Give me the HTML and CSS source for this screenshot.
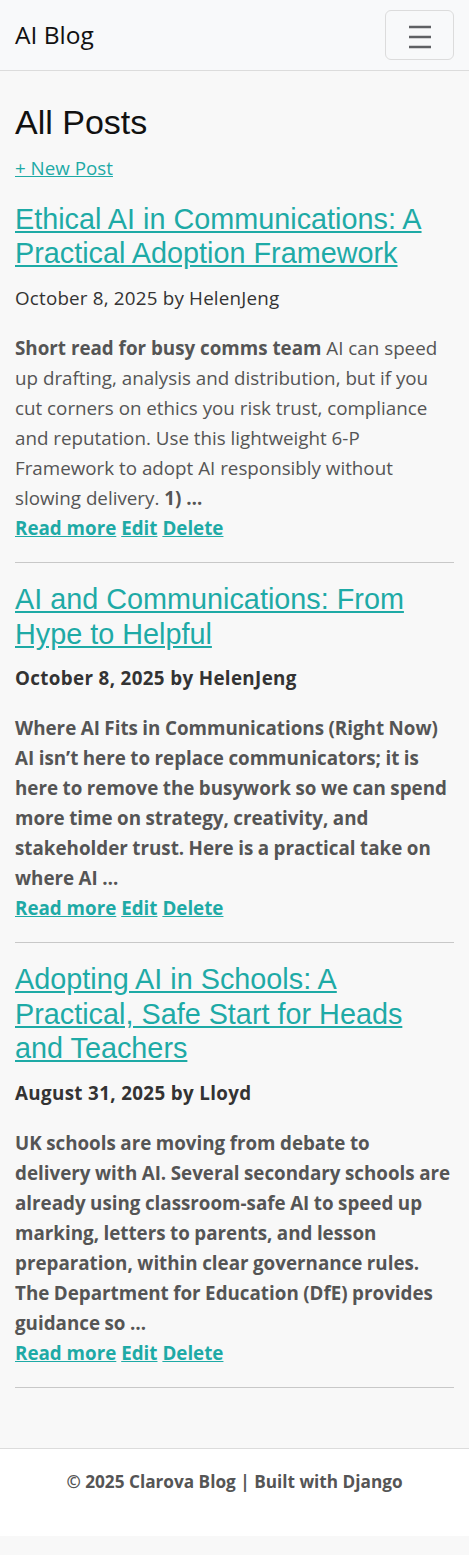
FILE: index.html
```html
<!DOCTYPE html>
<html lang="en">
<head>
<meta charset="utf-8">
<title>AI Blog</title>
<link rel="stylesheet" href="styles.css">
</head>
<body>
<nav class="navbar">
  <a class="brand" href="#">AI Blog</a>
  <button class="toggler" aria-label="Toggle navigation">
    <svg width="30" height="30" viewBox="0 0 30 30"><path d="M4 7h22M4 17h22M4 27h22" stroke="#5f6164" stroke-width="2.5" stroke-linecap="butt"/></svg>
  </button>
</nav>
<main class="container">
  <h1 class="page-title">All Posts</h1>
  <p class="new-post"><a href="#">+ New Post</a></p>

  <article class="post">
    <h2 class="post-title"><a href="#">Ethical AI in Communications: A Practical Adoption Framework</a></h2>
    <p class="meta">October 8, 2025 by HelenJeng</p>
    <p class="excerpt"><strong>Short read for busy comms team</strong> AI can speed up drafting, analysis and distribution, but if you cut corners on ethics you risk trust, compliance and reputation. Use this lightweight 6-P Framework to adopt AI responsibly without slowing delivery. <strong>1) …</strong></p>
    <div class="actions"><a href="#">Read more</a> <a href="#">Edit</a> <a href="#">Delete</a></div>
  </article>
  <hr class="divider">

  <article class="post bold">
    <h2 class="post-title"><a href="#">AI and Communications: From Hype to Helpful</a></h2>
    <p class="meta">October 8, 2025 by HelenJeng</p>
    <p class="excerpt">Where AI Fits in Communications (Right Now) AI isn’t here to replace communicators; it is here to remove the busywork so we can spend more time on strategy, creativity, and stakeholder trust. Here is a practical take on where AI …</p>
    <div class="actions"><a href="#">Read more</a> <a href="#">Edit</a> <a href="#">Delete</a></div>
  </article>
  <hr class="divider">

  <article class="post bold">
    <h2 class="post-title"><a href="#">Adopting AI in Schools: A Practical, Safe Start for Heads and Teachers</a></h2>
    <p class="meta">August 31, 2025 by Lloyd</p>
    <p class="excerpt">UK schools are moving from debate to<br>delivery with AI. Several secondary schools are already using classroom-safe AI to speed up marking, letters to parents, and lesson preparation, within clear governance rules. The Department for Education (DfE) provides guidance so …</p>
    <div class="actions"><a href="#">Read more</a> <a href="#">Edit</a> <a href="#">Delete</a></div>
  </article>
  <hr class="divider">
</main>
<footer class="footer">
  <p>© 2025 Clarova Blog | Built with Django</p>
</footer>
</body>
</html>
```

FILE: styles.css
```css
* { box-sizing: border-box; }
html, body { margin: 0; padding: 0; }
body {
  background: #f8f8f8;
  font-family: "Open Sans", "Noto Sans", sans-serif;
  font-size: 18.8px;
  line-height: 30px;
  color: #555;
}
a { color: #1eaaa6; }

.navbar {
  height: 71px;
  background: #f8f9fa;
  border-bottom: 1px solid #dcdcdc;
  display: flex;
  align-items: center;
  justify-content: space-between;
  padding: 0 15px;
}
.brand {
  color: #111;
  text-decoration: none;
  font-size: 24.5px;
  line-height: 30px;
}
.toggler {
  width: 69px;
  height: 50px;
  margin-top: -1px;
  border: 1px solid #dcdcdc;
  border-radius: 6px;
  background: transparent;
  display: flex;
  align-items: center;
  justify-content: center;
  padding: 0;
}
.toggler svg { display: block; }

.container {
  padding: 31px 15px 41px;
}
.page-title {
  font-family: "Liberation Sans", Arial, sans-serif;
  font-weight: 400;
  font-size: 34px;
  line-height: 40.8px;
  color: #111;
  margin: 0 0 10px;
}
.new-post { margin: 0 0 19px; }

.post-title {
  font-family: "Liberation Sans", Arial, sans-serif;
  font-weight: 400;
  font-size: 28.8px;
  line-height: 34.6px;
  margin: 0 0 12px;
}
.meta {
  color: #333;
  margin: 0 0 20px;
  letter-spacing: 0.2px;
}
.excerpt { margin: 0; }
.bold .meta { font-weight: 700; letter-spacing: 0.35px; }
.bold .excerpt { font-weight: 700; letter-spacing: 0; word-spacing: -0.4px; }
.excerpt strong { font-weight: 700; }
.actions a { font-weight: 700; }

.divider {
  border: 0;
  border-top: 1px solid #c8c8c8;
  margin: 19px 0;
}

.footer {
  background: #fff;
  border-top: 1px solid #dcdcdc;
  height: 88px;
  padding-top: 18px;
  text-align: center;
}
.footer p {
  margin: 0;
  font-weight: 700;
  color: #555;
  font-size: 17.2px;
  line-height: 30px;
}
```
